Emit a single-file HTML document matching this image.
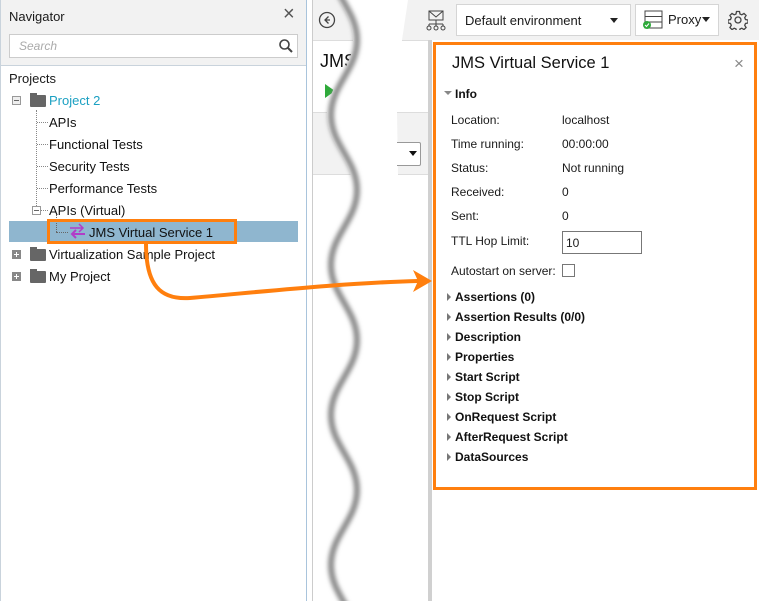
<!DOCTYPE html>
<html><head><meta charset="utf-8"><style>
*{margin:0;padding:0;box-sizing:border-box}
html,body{overflow:hidden}
body{width:759px;height:601px;background:#fff;font-family:"Liberation Sans",sans-serif;font-size:13px;color:#1a1a1a;position:relative}
.a{position:absolute;white-space:nowrap}
.tri{position:absolute;width:0;height:0;border-top:4px solid transparent;border-bottom:4px solid transparent;border-left:4px solid #777}
.sec{position:absolute;left:455px;font-weight:bold;font-size:12px;color:#111}
.lbl{position:absolute;left:451px;font-size:12px}
.val{position:absolute;left:562px;font-size:12px}
.tr{position:absolute;left:49px;font-size:13px;color:#111}
.dot{position:absolute;border-top:1px dotted #888;height:0}
.pm{position:absolute;width:9px;height:9px;border:1px solid #999;background:#eee}
.fold{position:absolute;width:16px;height:12px;background:#666;border-radius:1px}
.fold:before{content:"";position:absolute;left:0;top:-2px;width:7px;height:3px;background:#666}
</style></head><body>
<!-- navigator -->
<div class="a" style="left:0;top:0;width:307px;height:66px;background:#f2f2f2;border-bottom:1px solid #c9d3dc"></div>
<div class="a" style="left:306px;top:0;width:1px;height:601px;background:#a9c4dc"></div>
<div class="a" style="left:0;top:0;width:1px;height:601px;background:#c9d3dc"></div>
<div class="a" style="left:9px;top:9px;font-size:13px">Navigator</div>
<div class="a" style="left:283px;top:3px;font-size:20px;color:#555">×</div>
<div class="a" style="left:9px;top:34px;width:289px;height:24px;background:#fff;border:1px solid #ccc"></div>
<div class="a" style="left:19px;top:39px;font-style:italic;color:#aaa;font-size:12px">Search</div>
<svg class="a" style="left:278px;top:38px" width="16" height="16"><circle cx="6.5" cy="6.5" r="4.5" fill="none" stroke="#444" stroke-width="1.6"/><line x1="10" y1="10" x2="14" y2="14" stroke="#444" stroke-width="2"/></svg>
<div class="a" style="left:9px;top:71px">Projects</div>
<div class="pm" style="left:12px;top:96px"></div><div class="a" style="left:14px;top:100px;width:5px;height:1px;background:#666"></div>
<div class="fold" style="left:30px;top:95px"></div>
<div class="tr" style="top:93px;color:#1ba0c2">Project 2</div>
<div class="a" style="left:36px;top:110px;height:100px;border-left:1px dotted #888"></div>
<div class="dot" style="left:37px;top:122px;width:11px"></div><div class="tr" style="top:115px">APIs</div>
<div class="dot" style="left:37px;top:144px;width:11px"></div><div class="tr" style="top:137px">Functional Tests</div>
<div class="dot" style="left:37px;top:166px;width:11px"></div><div class="tr" style="top:159px">Security Tests</div>
<div class="dot" style="left:37px;top:188px;width:11px"></div><div class="tr" style="top:181px">Performance Tests</div>
<div class="pm" style="left:32px;top:206px;background:#fff"></div><div class="a" style="left:34px;top:210px;width:5px;height:1px;background:#666"></div>
<div class="dot" style="left:41px;top:210px;width:7px"></div><div class="tr" style="top:203px">APIs (Virtual)</div>
<div class="a" style="left:9px;top:221px;width:289px;height:21px;background:#8fb6cf"></div>
<div class="a" style="left:56px;top:215px;height:17px;border-left:1px dotted #666"></div>
<div class="dot" style="left:56px;top:232px;width:12px;border-color:#666"></div>
<svg class="a" style="left:69px;top:223px" width="17" height="16"><path d="M1 5h13M10 1l4 4-4 4" fill="none" stroke="#b23cc8" stroke-width="1.5"/><path d="M16 11H3M7 7l-4 4 4 4" fill="none" stroke="#b23cc8" stroke-width="2"/></svg>
<div class="tr" style="left:89px;top:225px;font-size:13px">JMS Virtual Service 1</div>
<div class="a" style="left:47px;top:219px;width:190px;height:25px;border:3px solid #ff7f0e"></div>
<div class="pm" style="left:12px;top:250px;background:#888;border-color:#888"></div><div class="a" style="left:14px;top:254px;width:5px;height:1px;background:#fff"></div><div class="a" style="left:16px;top:252px;width:1px;height:5px;background:#fff"></div>
<div class="fold" style="left:30px;top:249px"></div><div class="tr" style="top:247px">Virtualization Sample Project</div>
<div class="pm" style="left:12px;top:272px;background:#888;border-color:#888"></div><div class="a" style="left:14px;top:276px;width:5px;height:1px;background:#fff"></div><div class="a" style="left:16px;top:274px;width:1px;height:5px;background:#fff"></div>
<div class="fold" style="left:30px;top:271px"></div><div class="tr" style="top:269px">My Project</div>

<!-- middle -->
<div class="a" style="left:312px;top:0;width:1px;height:601px;background:#ccc"></div>
<div class="a" style="left:313px;top:0;width:446px;height:40px;background:#f2f2f2"></div>
<div class="a" style="left:313px;top:40px;width:115px;height:1px;background:#ddd"></div>
<div class="a" style="left:313px;top:112px;width:115px;height:63px;background:#f2f2f2;border-top:1px solid #ddd;border-bottom:1px solid #ddd"></div>
<svg class="a" style="left:318px;top:11px" width="18" height="18"><circle cx="9" cy="9" r="7.5" fill="none" stroke="#444" stroke-width="1.3"/><path d="M10.5 5.5L7 9l3.5 3.5M7 9h5" fill="none" stroke="#444" stroke-width="1.3"/></svg>
<div class="a" style="left:320px;top:51px;font-size:18px;color:#111">JMS</div>
<div class="a" style="left:325px;top:84px;width:0;height:0;border-top:7px solid transparent;border-bottom:7px solid transparent;border-left:10px solid #2eaa3a"></div>
<svg class="a" style="left:300px;top:0" width="128" height="601" viewBox="300 0 128 601">
<defs><filter id="b" x="-50%" y="-5%" width="200%" height="110%"><feGaussianBlur stdDeviation="2.2"/></filter></defs>
<path d="M327,-35 C327,-5 353,10 353,40 C353,70 327,85 327,115 C327,145 353,160 353,190 C353,220 327,235 327,265 C327,295 353,310 353,340 C353,370 327,385 327,415 C327,445 353,460 353,490 C353,520 327,535 327,565 C327,595 353,610 353,640 L398,640 L398,175 L397,112 L402,40 L408,0 L408,-35 Z" fill="#fff"/>
<path d="M327,-35 C327,-5 353,10 353,40 C353,70 327,85 327,115 C327,145 353,160 353,190 C353,220 327,235 327,265 C327,295 353,310 353,340 C353,370 327,385 327,415 C327,445 353,460 353,490 C353,520 327,535 327,565 C327,595 353,610 353,640" fill="none" stroke="#8a8a8a" stroke-width="6" filter="url(#b)" transform="translate(4,0)"/>
</svg>
<div class="a" style="left:397px;top:142px;width:24px;height:24px;background:#fff;border:1px solid #999;border-left:none;border-radius:0 2px 2px 0"></div>
<div class="a" style="left:409px;top:151px;border-left:4px solid transparent;border-right:4px solid transparent;border-top:5px solid #111"></div>
<div class="a" style="left:428px;top:40px;width:4px;height:561px;background:#d0d0d0"></div>

<!-- toolbar right -->
<svg class="a" style="left:425px;top:9px" width="22" height="22"><rect x="4" y="2" width="14" height="9" fill="none" stroke="#444"/><path d="M4 2l7 6 7-6M11 11v4M4 15h14M4 15v2M18 15v2M11 15v2" fill="none" stroke="#444"/><circle cx="4" cy="19" r="2" fill="none" stroke="#444"/><circle cx="11" cy="19" r="2" fill="none" stroke="#444"/><circle cx="18" cy="19" r="2" fill="none" stroke="#444"/></svg>
<div class="a" style="left:456px;top:4px;width:175px;height:32px;background:#fff;border:1px solid #d5d5d5"></div>
<div class="a" style="left:465px;top:13px;font-size:13px">Default environment</div>
<div class="a" style="left:610px;top:18px;border-left:4px solid transparent;border-right:4px solid transparent;border-top:5px solid #222"></div>
<div class="a" style="left:635px;top:4px;width:84px;height:32px;background:#fff;border:1px solid #d5d5d5"></div>
<svg class="a" style="left:642px;top:10px" width="22" height="20"><rect x="3" y="1" width="17" height="17" fill="#fff" stroke="#444"/><path d="M3 6.5h17M3 12h17" stroke="#444"/><circle cx="5" cy="15" r="4" fill="#2eaa3a"/><path d="M3 15l1.5 1.5L7 13.5" stroke="#fff" fill="none"/></svg>
<div class="a" style="left:668px;top:12px;font-size:13px">Proxy</div>
<div class="a" style="left:702px;top:17px;border-left:4px solid transparent;border-right:4px solid transparent;border-top:5px solid #222"></div>
<svg class="a" style="left:728px;top:10px" width="20" height="20" viewBox="0 0 20 20"><path d="M8.5 1.5h3l.5 2.5 1.8.8 2.2-1.4 2.1 2.1-1.4 2.2.8 1.8 2.5.5v3l-2.5.5-.8 1.8 1.4 2.2-2.1 2.1-2.2-1.4-1.8.8-.5 2.5h-3l-.5-2.5-1.8-.8-2.2 1.4-2.1-2.1 1.4-2.2-.8-1.8-2.5-.5v-3l2.5-.5.8-1.8-1.4-2.2 2.1-2.1 2.2 1.4 1.8-.8z" fill="none" stroke="#444" stroke-width="1.3"/><circle cx="10" cy="10" r="3" fill="none" stroke="#444" stroke-width="1.3"/></svg>

<!-- panel -->
<div class="a" style="left:433px;top:42px;width:324px;height:448px;border:3px solid #ff7f0e;background:#fff"></div>
<div class="a" style="left:452px;top:54px;font-size:16.5px;color:#111">JMS Virtual Service 1</div>
<div class="a" style="left:734px;top:54px;font-size:17px;color:#888">×</div>
<div class="a" style="left:444px;top:91px;border-left:4px solid transparent;border-right:4px solid transparent;border-top:4px solid #888"></div>
<div class="sec" style="top:87px">Info</div>
<div class="lbl" style="top:113px">Location:</div><div class="val" style="top:113px">localhost</div>
<div class="lbl" style="top:137px">Time running:</div><div class="val" style="top:137px">00:00:00</div>
<div class="lbl" style="top:161px">Status:</div><div class="val" style="top:161px">Not running</div>
<div class="lbl" style="top:185px">Received:</div><div class="val" style="top:185px">0</div>
<div class="lbl" style="top:209px">Sent:</div><div class="val" style="top:209px">0</div>
<div class="lbl" style="top:234px">TTL Hop Limit:</div>
<div class="a" style="left:562px;top:231px;width:80px;height:23px;border:1px solid #777"></div>
<div class="val" style="left:566px;top:236px">10</div>
<div class="lbl" style="top:264px">Autostart on server:</div>
<div class="a" style="left:562px;top:264px;width:13px;height:13px;border:1px solid #777"></div>
<div class="tri" style="left:447px;top:293px"></div><div class="sec" style="top:290px">Assertions (0)</div>
<div class="tri" style="left:447px;top:313px"></div><div class="sec" style="top:310px">Assertion Results (0/0)</div>
<div class="tri" style="left:447px;top:333px"></div><div class="sec" style="top:330px">Description</div>
<div class="tri" style="left:447px;top:353px"></div><div class="sec" style="top:350px">Properties</div>
<div class="tri" style="left:447px;top:373px"></div><div class="sec" style="top:370px">Start Script</div>
<div class="tri" style="left:447px;top:393px"></div><div class="sec" style="top:390px">Stop Script</div>
<div class="tri" style="left:447px;top:413px"></div><div class="sec" style="top:410px">OnRequest Script</div>
<div class="tri" style="left:447px;top:433px"></div><div class="sec" style="top:430px">AfterRequest Script</div>
<div class="tri" style="left:447px;top:453px"></div><div class="sec" style="top:450px">DataSources</div>

<!-- arrow -->
<svg class="a" style="left:0;top:0" width="759" height="601">
<path d="M146,244 C146,285 160,300 190,298 C260,292 340,283 418,281" fill="none" stroke="#ff7f0e" stroke-width="4"/>
<path d="M432,281 L413,270 L418,281 L413,292 Z" fill="#ff7f0e"/>
</svg>
</body></html>
